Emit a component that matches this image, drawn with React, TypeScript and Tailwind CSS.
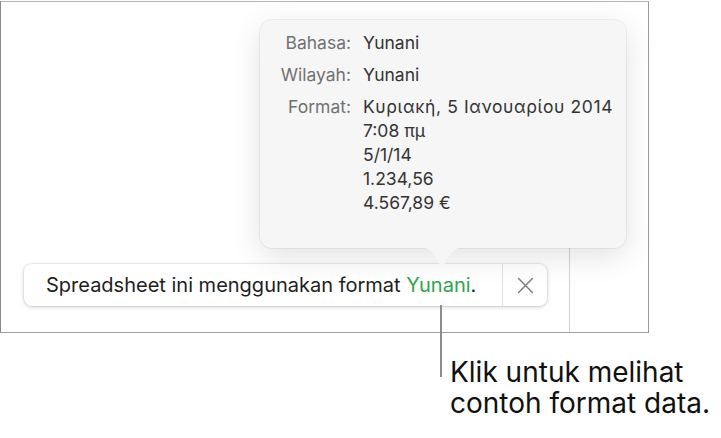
import React from 'react';

const rows: { label: string; values: string[] }[] = [
    { label: 'Bahasa:', values: ['Yunani'] },
    { label: 'Wilayah:', values: ['Yunani'] },
    {
        label: 'Format:',
        values: [
            'Κυριακή, 5 Ιανουαρίου 2014',
            '7:08 πμ',
            '5/1/14',
            '1.234,56',
            '4.567,89 €',
        ],
    },
];

const PopoverArrow = () => (
    <svg
        className="absolute left-[156px] top-[226px]"
        width="52"
        height="22"
        viewBox="0 0 52 22"
    >
        <path
            d="M0 1 C10 1 14 3 18 9 L24 19 Q26 22 28 19 L34 9 C38 3 42 1 52 1 L52 0 L0 0 Z"
            fill="#f6f6f6"
        />
    </svg>
);

const App: React.FC = () => {
    return (
        <div
            className="h-[438px] w-[721px] overflow-hidden bg-white"
            style={{ fontFamily: 'Inter, "Noto Sans", sans-serif' }}
        >
            <div className="mt-px flex h-[332px] w-[649px] flex-col border border-l-[#8a8a8a] border-t-[#b4b4b4] border-r-[#9a9a9a] border-b-[#a0a0a0]">
                <div className="flex h-[246px] pl-[259px] pt-[18px]">
                    <div className="relative z-10 h-[228px] w-[366px] rounded-[12px] bg-[#f6f6f6] pl-[13px] pt-[11px] shadow-[0_8px_30px_rgba(0,0,0,0.12),0_0_0_1px_rgba(0,0,0,0.05)]">
                        <div className="flex flex-col gap-2 text-[17.5px] leading-[24px]">
                            {rows.map((row) => (
                                <div key={row.label} className="flex gap-3">
                                    <div className="w-[78px] text-right text-[#717171]">
                                        {row.label}
                                    </div>
                                    <div className="flex flex-col text-[#343434]">
                                        {row.values.map((v, i) => (
                                            <span
                                                key={v}
                                                className={
                                                    i === 0 && row.values.length > 1
                                                        ? 'tracking-[0.6px]'
                                                        : ''
                                                }
                                            >
                                                {v}
                                            </span>
                                        ))}
                                    </div>
                                </div>
                            ))}
                        </div>
                        <PopoverArrow />
                    </div>
                </div>
                <div className="flex h-[85px] w-[569px] border-r border-[#d2d2d2] pl-[23px] pt-[16px]">
                    <div className="flex h-[42px] w-[523px] items-center rounded-[8px] bg-white shadow-[0_1px_4px_rgba(0,0,0,0.2),0_0_0_1px_rgba(0,0,0,0.04)]">
                        <div className="flex-1 pl-[22px] text-[20px] text-[#1e1e1e]">
                            Spreadsheet ini menggunakan format{' '}
                            <span className="text-[#2fa550]">Yunani</span>.
                        </div>
                        <div className="flex h-full w-[45px] items-center justify-center border-l border-[#e2e2e2]">
                            <svg width="17" height="17" viewBox="0 0 16 16">
                                <path
                                    d="M1.5 1.5 L14.5 14.5 M14.5 1.5 L1.5 14.5"
                                    stroke="#7d7d7d"
                                    strokeWidth="1.4"
                                    strokeLinecap="round"
                                />
                            </svg>
                        </div>
                    </div>
                </div>
            </div>
            <div className="flex pl-[440px]">
                <div className="-mt-[28px] h-[72px] w-[2px] bg-[#8c8c8c]" />
                <div className="pl-[8px] pt-[24px] text-[28px] leading-[31px] text-[#111]">
                    Klik untuk melihat
                    <br />
                    contoh format data.
                </div>
            </div>
        </div>
    );
};

export default App;
